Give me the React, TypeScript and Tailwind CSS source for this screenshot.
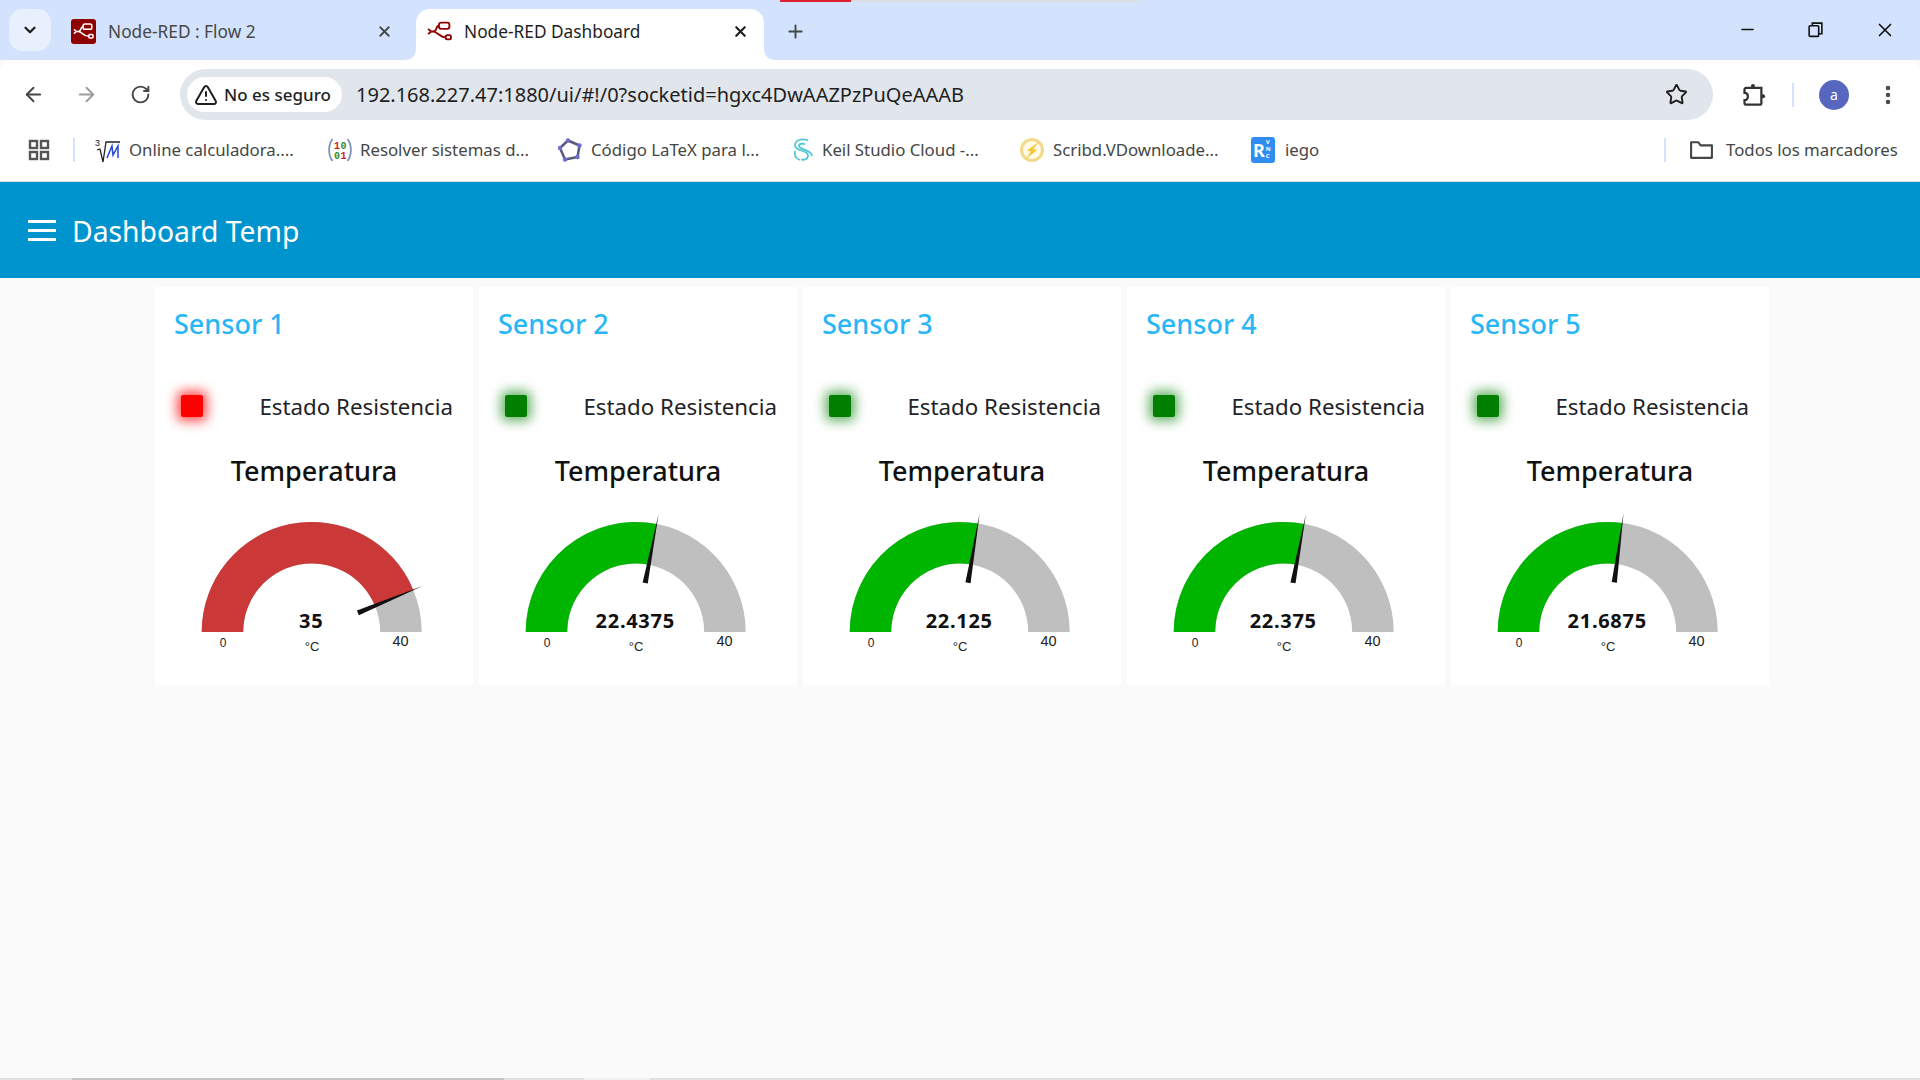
import { ArrowLeft, ArrowRight, ChevronDown, EllipsisVertical, Minus, Plus, RotateCw, Star, TriangleAlert, X } from 'lucide-react';

const sensors = [
	{ name: 'Sensor 1', value: 35, hot: true },
	{ name: 'Sensor 2', value: 22.4375, hot: false },
	{ name: 'Sensor 3', value: 22.125, hot: false },
	{ name: 'Sensor 4', value: 22.375, hot: false },
	{ name: 'Sensor 5', value: 21.6875, hot: false }
];

function NodeRedMark({ color, className }: { color: string; className?: string }) {
	return (
		<svg viewBox="0 0 24 24" className={className} fill="none" stroke={color} strokeWidth="1.800">
			<rect x="11.500" y="3.500" width="10" height="6" rx="2" />
			<rect x="18" y="15.500" width="5" height="4" rx="1.500" />
			<path d="M1 9.500l3 2.500M1 14.500l3-2.500" />
			<path d="M4 12h2c4 0 2-5.500 5.500-5.500M6 12c4 0 6 5.500 12 5.500" />
		</svg>
	);
}

function Tabs() {
	return (
		<div className="h-[60px] bg-[#d3e3fd] flex flex-col shrink-0">
			<div className="h-[2px] flex pl-[780px]">
				<div className="w-[71px] bg-[#e0202f]" />
				<div className="w-[289px] bg-[#dcdfe2]" />
			</div>
			<div className="flex-1 flex items-end pl-[9px]">
				<div className="w-[42px] h-[42px] mb-[9px] rounded-[14px] bg-[#e8f0fe] flex items-center justify-center">
					<ChevronDown size={18} strokeWidth={3} color="#1f1f1f" />
				</div>
				<div className="w-[365px] h-[51px] flex items-center pl-[20px] pb-[6px] text-[17.300px] text-[#474747]">
					<div className="w-[25px] h-[25px] rounded-[3px] bg-[#8f0000] flex items-center justify-center">
						<NodeRedMark color="#ffffff" className="w-[21px] h-[21px]" />
					</div>
					<span className="ml-[12px] w-[268px]">Node-RED : Flow 2</span>
					<X size={17} strokeWidth={2.500} color="#444746" />
				</div>
				<div className="relative w-[348px] h-[51px] bg-white rounded-t-[14px] flex items-center pl-[11px] pb-[6px] text-[17.300px] text-[#1f1f1f]">
					<svg viewBox="0 0 12 12" className="absolute -left-[12px] bottom-0 w-[12px] h-[12px]">
						<path d="M12 0v12H0c8 0 12-4 12-12z" fill="#ffffff" />
					</svg>
					<svg viewBox="0 0 12 12" className="absolute -right-[12px] bottom-0 w-[12px] h-[12px]">
						<path d="M0 0v12h12C4 12 0 8 0 0z" fill="#ffffff" />
					</svg>
					<NodeRedMark color="#8f0000" className="w-[25px] h-[25px]" />
					<span className="ml-[12px] w-[268px]">Node-RED Dashboard</span>
					<X size={17} strokeWidth={3} color="#1f1f1f" />
				</div>
				<div className="h-[51px] ml-[21px] pb-[6px] flex items-center">
					<Plus size={21} strokeWidth={2.200} color="#444746" />
				</div>
				<div className="h-[51px] flex items-center ml-[932px] pb-[10px]">
					<Minus size={19} strokeWidth={2} color="#111111" />
					<svg viewBox="0 0 16 16" className="w-[17px] h-[17px] ml-[50px]" fill="none" stroke="#111111" strokeWidth="1.500">
						<rect x="2" y="4.500" width="9" height="10" rx="1" />
						<path d="M5 4.500V2h9v10h-3" />
					</svg>
					<X size={22} strokeWidth={1.800} color="#111111" className="ml-[50px]" />
				</div>
			</div>
		</div>
	);
}

function Toolbar() {
	return (
		<div className="h-[60px] bg-white rounded-t-[12px] flex items-start pt-[9px] shrink-0">
			<div className="h-[51px] flex items-center pl-[22px]">
				<ArrowLeft size={23} strokeWidth={2} color="#444746" />
				<ArrowRight size={23} strokeWidth={2} color="#9a9c9e" className="ml-[30px]" />
				<RotateCw size={21} strokeWidth={2.200} color="#444746" className="ml-[32px]" />
			</div>
			<div className="ml-[29px] w-[1533px] h-[51px] rounded-full bg-[#e1e5ec] flex items-center pl-[7px]">
				<div className="w-[155px] h-[35px] rounded-full bg-white flex items-center pl-[7px] text-[17px] font-medium text-[#1f1f1f]">
					<TriangleAlert size={24} strokeWidth={2} color="#1f1f1f" />
					<span className="ml-[6px] whitespace-nowrap">No es seguro</span>
				</div>
				<span className="ml-[14px] text-[20px] text-[#1f1f1f] whitespace-nowrap">192.168.227.47:1880/ui/#!/0?socketid=hgxc4DwAAZPzPuQeAAAB</span>
				<Star size={23} strokeWidth={2} color="#1f1f1f" className="ml-auto mr-[25px]" />
			</div>
			<div className="h-[51px] flex items-center">
				<svg viewBox="0 0 24 24" className="w-[27px] h-[27px] ml-[27px]" fill="none" stroke="#333333" strokeWidth="2">
					<path d="M4 7.500A1.500 1.500 0 0 1 5.500 6H19v14a1 1 0 0 1-1 1H5.500A1.500 1.500 0 0 1 4 19.500V17c2 0 3-1.300 3-3.500s-1-3-3-3z" />
					<circle cx="11.500" cy="4.500" r="1.800" fill="#333333" stroke="none" />
					<circle cx="20.500" cy="13.500" r="1.800" fill="#333333" stroke="none" />
				</svg>
				<div className="w-[2px] h-[24px] bg-[#d3e3fd] ml-[25px]" />
				<div className="w-[30px] h-[30px] rounded-full bg-[#5767c0] ml-[25px] flex items-center justify-center text-white text-[14px]">a</div>
				<EllipsisVertical size={24} strokeWidth={2.500} color="#444746" className="ml-[27px]" />
			</div>
		</div>
	);
}

function Favicon({ kind }: { kind: number }) {
	if (kind === 0)
		return (
			<svg viewBox="0 0 26 26" className="w-[26px] h-[26px]" fill="none">
				<path d="M2 13l3-1 3 13 3-20h14" stroke="#222222" strokeWidth="1.300" />
				<text x="0" y="9" fontSize="9" fill="#222222" fontFamily="Liberation Sans">3</text>
				<path d="M12 21l5-12 1 9 5-9v12" stroke="#2446d8" strokeWidth="1.500" />
			</svg>
		);
	if (kind === 1)
		return (
			<svg viewBox="0 0 26 26" className="w-[26px] h-[26px]" fill="none">
				<path d="M5.500 2c-4.500 6-4.500 16 0 22M20.500 2c4.500 6 4.500 16 0 22" stroke="#7f93b8" strokeWidth="1.800" />
				<text x="7" y="11.500" fontSize="10" fontWeight="700" fill="#d32020" fontFamily="Liberation Mono">1</text>
				<text x="13.500" y="11.500" fontSize="10" fontWeight="700" fill="#2e8b32" fontFamily="Liberation Mono">0</text>
				<text x="7" y="21.500" fontSize="10" fontWeight="700" fill="#2e8b32" fontFamily="Liberation Mono">0</text>
				<text x="13.500" y="21.500" fontSize="10" fontWeight="700" fill="#d32020" fontFamily="Liberation Mono">1</text>
			</svg>
		);
	if (kind === 2)
		return (
			<svg viewBox="0 0 26 26" className="w-[26px] h-[26px]" fill="none" stroke="#5b5880" strokeWidth="2.500">
				<path d="M11 3.500l11.500 5-2 11.500-12.500 2.500L3 11z" strokeLinejoin="round" />
				<g fill="#6f6dc9" stroke="none">
					<circle cx="11" cy="3.500" r="2.200" />
					<circle cx="22.500" cy="8.500" r="2.200" />
					<circle cx="20.500" cy="20" r="2.200" />
					<circle cx="8" cy="22.500" r="2.200" />
					<circle cx="3" cy="11" r="2.200" />
				</g>
			</svg>
		);
	if (kind === 3)
		return (
			<svg viewBox="0 0 26 26" className="w-[26px] h-[26px]" fill="none" stroke="#4cc7d6" strokeWidth="1.800">
				<path d="M18 3.500C12 1 5 3 5 8.500c0 6 13 4 13 10 0 3-3 5-7 4" />
				<path d="M15 7.500c-2-1.500-6-1-6 1.500 0 3.500 13 3.500 13 10" />
				<path d="M5 14c-1 4 1 8 5 9" />
			</svg>
		);
	if (kind === 4)
		return (
			<svg viewBox="0 0 26 26" className="w-[26px] h-[26px]">
				<circle cx="13" cy="13" r="10.500" fill="#fffbe8" stroke="#f3d98a" strokeWidth="3" />
				<path d="M21 4L8 13.500l4 1-5 7.500 11-9-4-1z" fill="#f4c430" />
			</svg>
		);
	return (
		<div className="w-[24px] h-[26px] rounded-[3px] bg-[#2f8cf0] flex items-center pl-[2px] text-white font-bold leading-none">
			<span className="text-[18px]">R</span>
			<span className="flex flex-col text-[6px] leading-[7px] ml-px">
				<span>V</span>
				<span>N</span>
				<span>C</span>
			</span>
		</div>
	);
}

const bookmarks = [
	{ label: 'Online calculadora....', w: 'w-[232px]', iconW: 'w-[34px]' },
	{ label: 'Resolver sistemas d...', w: 'w-[230px]', iconW: 'w-[33px]' },
	{ label: 'Código LaTeX para l...', w: 'w-[233px]', iconW: 'w-[34px]' },
	{ label: 'Keil Studio Cloud -...', w: 'w-[229px]', iconW: 'w-[32px]' },
	{ label: 'Scribd.VDownloade...', w: 'w-[232px]', iconW: 'w-[34px]' },
	{ label: 'iego', w: 'w-[80px]', iconW: 'w-[34px]' }
];

function Bookmarks() {
	return (
		<div className="h-[62px] bg-white border-b border-[#dcdcdc] flex items-center pl-[28px] pb-[2px] text-[16.800px] text-[#444746] shrink-0">
			<svg viewBox="0 0 22 22" className="w-[22px] h-[22px]" fill="none" stroke="#555555" strokeWidth="2.400">
				<rect x="2" y="2" width="7" height="7" />
				<rect x="13" y="2" width="7" height="7" />
				<rect x="2" y="13" width="7" height="7" />
				<rect x="13" y="13" width="7" height="7" />
			</svg>
			<div className="w-[2px] h-[24px] bg-[#d3e3fd] ml-[23px] mr-[20px]" />
			{bookmarks.map((b, i) => (
				<div key={b.label} className={`${b.w} flex items-center shrink-0`}>
					<div className={`${b.iconW} shrink-0`}>
						<Favicon kind={i} />
					</div>
					<span className="whitespace-nowrap">{b.label}</span>
				</div>
			))}
			<div className="w-[2px] h-[24px] bg-[#d3e3fd] ml-[333px]" />
			<svg viewBox="0 0 24 24" className="w-[25px] h-[25px] ml-[23px]" fill="none" stroke="#444746" strokeWidth="2">
				<path d="M2 5h7l2 3h11v12H2z" strokeLinejoin="round" />
			</svg>
			<span className="ml-[12px] whitespace-nowrap">Todos los marcadores</span>
		</div>
	);
}

function Gauge({ value, hot }: { value: number; hot: boolean }) {
	const cx = 156.7;
	const cy = 127;
	const R = 110;
	const r = 68.5;
	const a = Math.PI * (1 - value / 40);
	const px = (rad: number, ang: number) => `${(cx + rad * Math.cos(ang)).toFixed(2)} ${(cy - rad * Math.sin(ang)).toFixed(2)}`;
	const n = 2.6;
	const bx = 50 * Math.cos(a);
	const by = 50 * Math.sin(a);
	const nx = Math.sin(a) * n;
	const ny = Math.cos(a) * n;
	return (
		<svg viewBox="0 0 318 179" className="w-[318px] h-[179px] mt-[3px]">
			<path d={`M${cx - R} ${cy}A${R} ${R} 0 0 1 ${cx + R} ${cy}H${cx + r}A${r} ${r} 0 0 0 ${cx - r} ${cy}Z`} fill="#bfbfbf" />
			<path d={`M${cx - R} ${cy}A${R} ${R} 0 0 1 ${px(R, a)}L${px(r, a)}A${r} ${r} 0 0 0 ${cx - r} ${cy}Z`} fill={hot ? '#ca3838' : '#00b500'} />
			<polygon
				points={`${cx + bx - nx} ${cy - by - ny} ${cx + bx + nx} ${cy - by + ny} ${px(120, a)}`}
				fill="#111111"
			/>
			<text x={cx - 0.5} y={123} textAnchor="middle" fontSize="20" fontWeight="700" letterSpacing="0.7" fill="#111111" fontFamily="Noto Sans, sans-serif">{value}</text>
			<text x={68} y={142} textAnchor="middle" fontSize="12" fill="#222222" fontFamily="Liberation Sans, sans-serif">0</text>
			<text x={245.500} y={141} textAnchor="middle" fontSize="14.500" fill="#222222" fontFamily="Liberation Sans, sans-serif">40</text>
			<text x={157} y={146} textAnchor="middle" fontSize="13" fill="#222222" fontFamily="Liberation Sans, sans-serif">°C</text>
		</svg>
	);
}

function SensorCard({ name, value, hot }: { name: string; value: number; hot: boolean }) {
	return (
		<div className="w-[318px] h-[398px] bg-white flex flex-col shrink-0">
			<div className="pl-[19px] pt-[16px] h-[83px] text-[27px] font-medium leading-[42px] text-[#29b6f6]">{name}</div>
			<div className="h-[70px] flex items-center pl-[26px] pr-[20px] pt-[2px]">
				<div className={`w-[22px] h-[22px] rounded-[2px] ${hot ? 'bg-[#ff0000] shadow-[0_0_12px_4px_rgba(255,0,0,0.7)]' : 'bg-[#007f00] shadow-[0_0_12px_4px_rgba(0,127,0,0.6)]'}`} />
				<span className="ml-auto mt-[2px] text-[22.300px] text-[#1f2328]">Estado Resistencia</span>
			</div>
			<div className="h-[62px] flex items-center justify-center text-[27px] font-medium text-[#111111]">Temperatura</div>
			<Gauge value={value} hot={hot} />
		</div>
	);
}

export default function App() {
	return (
		<div className="w-[1920px] h-[1080px] overflow-hidden flex flex-col bg-[#fafafa] font-['Noto_Sans',sans-serif]">
			<Tabs />
			<Toolbar />
			<Bookmarks />
			<header className="h-[96px] bg-[#0094ce] flex items-center pl-[28px] shrink-0">
				<div className="w-[28px] flex flex-col gap-[6px]">
					<div className="h-[3px] bg-white" />
					<div className="h-[3px] bg-white" />
					<div className="h-[3px] bg-white" />
				</div>
				<span className="ml-[16px] mt-[2px] text-[28.300px] text-white">Dashboard Temp</span>
			</header>
			<main className="flex-1 pl-[155px] pt-[9px] flex gap-[6px] items-start">
				{sensors.map((s) => (
					<SensorCard key={s.name} {...s} />
				))}
			</main>
			<div className="h-[2px] flex bg-[#e0e0e0] shrink-0">
				<div className="w-[72px]" />
				<div className="w-[432px] bg-[#c4c4c4]" />
				<div className="w-[80px]" />
				<div className="w-[66px] bg-[#f0f0f0]" />
			</div>
		</div>
	);
}
